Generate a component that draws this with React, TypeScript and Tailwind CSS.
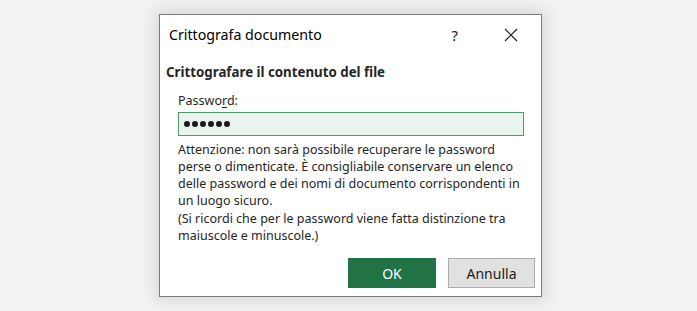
const font = { fontFamily: '"Noto Sans", "Open Sans", sans-serif' };

const CloseIcon = () => (
    <svg width="14" height="14" viewBox="0 0 14 14" className="block">
        <path d="M1 1 L13 13 M13 1 L1 13" stroke="#1a1a1a" strokeWidth="1.1" fill="none" />
    </svg>
);

const PasswordDots = ({ count }: { count: number }) => (
    <div className="flex items-center gap-[2px]">
        {Array.from({ length: count }).map((_, i) => (
            <span key={i} className="block w-[6px] h-[6px] rounded-full bg-[#1c1c1c]" />
        ))}
    </div>
);

export default function App() {
    return (
        <div
            className="w-[697px] h-[311px] bg-[#f2f2f2] flex justify-start items-start pl-[159px] pt-[14px]"
            style={font}
        >
            <div className="w-[383px] h-[283px] bg-white border border-[#7a7a7a] shadow-[0_0_14px_4px_rgba(0,0,0,0.10)] flex flex-col">
                {/* title bar */}
                <div className="h-[39px] flex items-center pl-[9px] pr-[23px] pt-[1px]">
                    <p className="flex-1 text-[14.2px] text-black leading-none">Crittografa documento</p>
                    <span className="text-[15px] text-[#1a1a1a] mr-[46px] leading-none">?</span>
                    <CloseIcon />
                </div>

                <div className="pl-[6px] pr-[17px] pt-[12px]">
                    <p className="text-[13.3px] font-bold text-[#262626] leading-none">
                        Crittografare il contenuto del file
                    </p>
                </div>

                <div className="pl-[18px] pr-[17px] pt-[16px] flex flex-col">
                    <p className="text-[12.5px] text-[#262626] leading-none">
                        Passwo<span className="underline underline-offset-2">r</span>d:
                    </p>
                    <div className="mt-[4px] h-[24px] w-[346px] border border-[#4e9a6d] bg-[#e9f4ed] flex items-center pl-[5px]">
                        <PasswordDots count={6} />
                    </div>
                    <div className="mt-[5px] text-[12.5px] leading-[17.2px] text-[#262626] whitespace-nowrap">
                        <p>Attenzione: non sarà possibile recuperare le password</p>
                        <p>perse o dimenticate. È consigliabile conservare un elenco</p>
                        <p>delle password e dei nomi di documento corrispondenti in</p>
                        <p>un luogo sicuro.</p>
                        <p>(Si ricordi che per le password viene fatta distinzione tra</p>
                        <p>maiuscole e minuscole.)</p>
                    </div>
                </div>

                <div className="flex justify-end gap-[12px] pr-[6px] mt-auto mb-[8px]">
                    <button className="w-[88px] h-[30px] bg-[#217346] text-white text-[14px] flex items-center justify-center">
                        OK
                    </button>
                    <button className="w-[87px] h-[30px] bg-[#e1e1e1] border border-[#adadad] text-[#1a1a1a] text-[14px] flex items-center justify-center">
                        Annulla
                    </button>
                </div>
            </div>
        </div>
    );
}
